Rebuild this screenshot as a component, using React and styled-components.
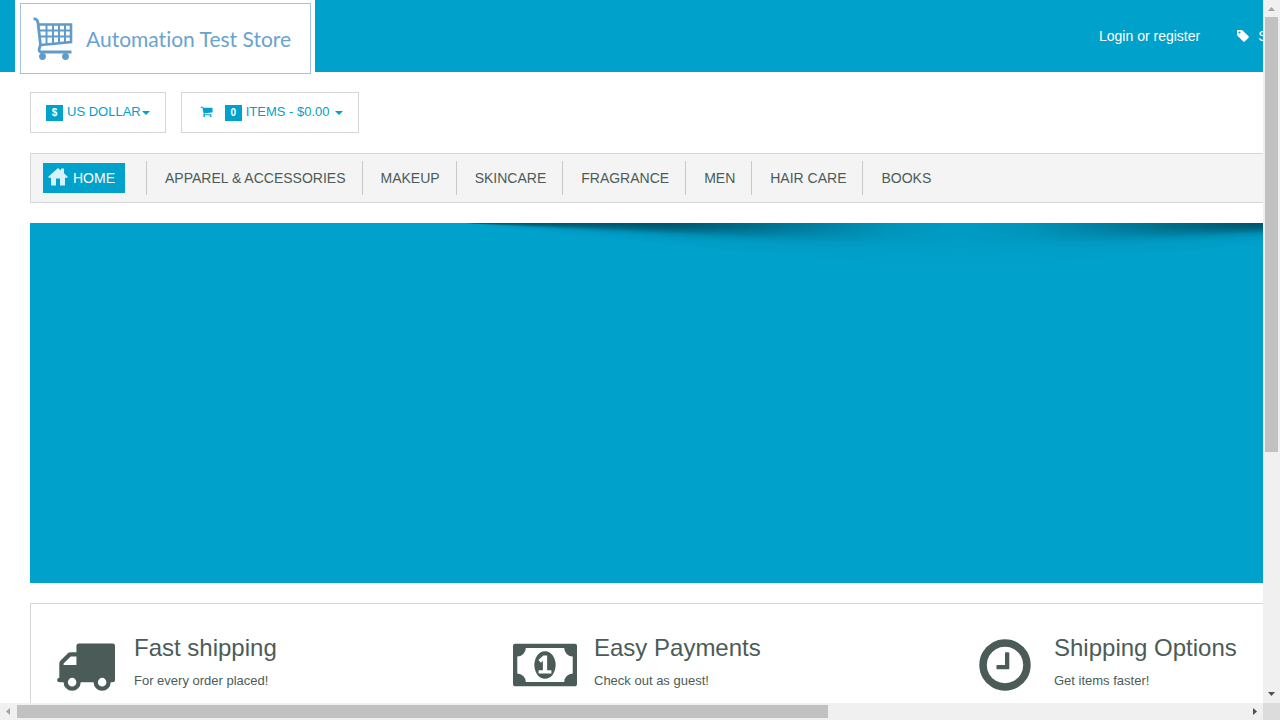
import React from 'react';
import styled, { createGlobalStyle } from 'styled-components';

const BLUE = '#00a1cb';
const INK = '#4b5c58';
const LINE = '#d6d6d6';

const Global = createGlobalStyle`
  * { box-sizing: border-box; }
  body {
    margin: 0;
    background: #fff;
    color: ${INK};
    font-family: "Liberation Sans", Arial, sans-serif;
    font-size: 14px;
    line-height: 20px;
  }
  a { color: inherit; text-decoration: none; }
  button { font: inherit; cursor: pointer; }
`;

const Frame = styled.div`
  display: grid;
  grid-template-columns: minmax(0, 1fr) 17px;
  grid-template-rows: minmax(0, 1fr) 17px;
  height: 100vh;
`;

const Viewport = styled.div`
  overflow: hidden;
`;

const Page = styled.div`
  min-width: 1920px;
`;

const Header = styled.header`
  display: flex;
  justify-content: space-between;
  height: 72px;
  padding: 0 15px;
  background: ${BLUE};
`;

const LogoPanel = styled.div`
  width: 300px;
  padding: 3px 4px 0 5px;
  background: #fff;
`;

const Logo = styled.a`
  display: flex;
  align-items: center;
  gap: 12px;
  height: 71px;
  padding-left: 12px;
  background: #fff;
  border: 1px solid #9fc3e4;
  color: #69a3d0;
  font-family: Lato, "Open Sans", sans-serif;
  font-size: 21px;
  font-variant-ligatures: none;
  white-space: nowrap;
`;

const TopNav = styled.nav`
  display: flex;
  align-items: center;
  gap: 36px;
  width: 806px;
  color: #fff;
`;

const TopLink = styled.a`
  display: flex;
  align-items: center;
  gap: 8px;
`;

const Tools = styled.div`
  display: flex;
  gap: 15px;
  padding: 20px 30px;
`;

const ToolButton = styled.button`
  display: flex;
  align-items: center;
  height: 41px;
  padding: 0 15px 2px ${(p) => (p.$wide ? '18px' : '15px')};
  background: #fff;
  border: 1px solid ${LINE};
  color: ${BLUE};
  font-size: 13px;
  white-space: nowrap;
`;

const Badge = styled.span`
  width: 17px;
  height: 16px;
  margin: 3px 4px 0 ${(p) => (p.$spaced ? '12px' : '0')};
  background: ${BLUE};
  color: #fff;
  font-size: 10px;
  font-weight: bold;
  line-height: 16px;
  text-align: center;
`;

const Caret = styled.span`
  margin: 3px 0 0 ${(p) => (p.$spaced ? '5px' : '1px')};
  border: 4px solid transparent;
  border-top-color: currentColor;
  border-bottom: 0;
`;

const MainNav = styled.nav`
  display: flex;
  align-items: center;
  height: 50px;
  margin: 0 30px 20px;
  padding-left: 12px;
  background: #f4f4f4;
  border: 1px solid ${LINE};
`;

const HomeLink = styled.a`
  display: flex;
  align-items: center;
  gap: 5px;
  height: 30px;
  margin-right: 21px;
  padding: 0 10px 0 5px;
  background: ${BLUE};
  color: #fff;
  svg { margin-bottom: 3px; }
`;

const NavLink = styled.a`
  height: 34px;
  padding: 0 16px 0 18px;
  border-left: 1px solid #c9c9c9;
  line-height: 34px;
  white-space: nowrap;
`;

const Banner = styled.section`
  display: flex;
  justify-content: center;
  height: 360px;
  margin: 0 30px 20px;
  background: ${BLUE};
`;

/* Half of the banner's curled-paper shadow: it opens out from the tip and fades to the centre. */
const Wing = styled.div`
  width: 500px;
  height: 60px;
  background: conic-gradient(
    from 90deg at 0 0,
    rgb(0 0 0 / 48%) 0deg,
    rgb(0 0 0 / 42%) 1deg,
    rgb(0 0 0 / 30%) 2deg,
    rgb(0 0 0 / 12%) 3deg,
    rgb(0 0 0 / 4%) 4deg,
    transparent 6deg
  );
  mask-image: linear-gradient(to right, #000 0%, #000 42%, rgb(0 0 0 / 80%) 54%, rgb(0 0 0 / 48%) 70%, rgb(0 0 0 / 18%) 86%, rgb(0 0 0 / 8%) 100%);
  transform: ${(p) => (p.$mirrored ? 'scaleX(-1)' : 'none')};
`;

const Perks = styled.section`
  display: grid;
  grid-template-columns: repeat(4, 460px);
  margin: 0 30px;
  padding: 29px 0 40px 9px;
  border: 1px solid ${LINE};
`;

const Perk = styled.article`
  display: grid;
  grid-template-columns: 90px 1fr;
  column-gap: 4px;
`;

const PerkIcon = styled.div`
  display: flex;
  justify-content: center;
  padding-top: 2px;
`;

const PerkTitle = styled.h2`
  margin: 0;
  font-size: 24px;
  font-weight: normal;
  line-height: 30px;
`;

const PerkText = styled.p`
  margin: 8px 0 0;
  font-size: 13px;
`;

const VBar = styled.div`
  display: flex;
  flex-direction: column;
  align-items: center;
  background: #f0f0f0;
`;

const HBar = styled.div`
  display: flex;
  align-items: center;
  background: #f0f0f0;
`;

const Corner = styled.div`
  background: #dcdcdc;
`;

const Arrow = styled.svg`
  flex: none;
  display: block;
  width: 17px;
  height: 17px;
  fill: ${(p) => (p.$off ? '#a3a3a3' : '#505050')};
`;

const Track = styled.div`
  display: flex;
  flex: 1;
  flex-direction: ${(p) => (p.$vertical ? 'column' : 'row')};
  align-self: center;
`;

const Thumb = styled.div`
  flex: 0 0 ${(p) => p.$size};
  width: ${(p) => (p.$vertical ? '13px' : 'auto')};
  height: ${(p) => (p.$vertical ? 'auto' : '13px')};
  background: #c1c1c1;
`;

const PATHS = {
  truck: 'M640 1408q0-52-38-90t-90-38-90 38-38 90 38 90 90 38 90-38 38-90zm-384-512h384v-256h-158q-13 0-22 9l-195 195q-9 9-9 22v30zm1280 512q0-52-38-90t-90-38-90 38-38 90 38 90 90 38 90-38 38-90zm256-1088v1024q0 15-4 26.500t-13.500 18.500-16.500 11.500-23.500 6-22.500 2-25.500 0-22.500-.5q0 106-75 181t-181 75-181-75-75-181h-384q0 106-75 181t-181 75-181-75-75-181h-64q-3 0-22.500.5t-25.500 0-22.500-2-23.500-6-16.500-11.500-13.500-18.500-4-26.500q0-26 19-45t45-19v-320q0-8-.5-35t0-38 2.500-34.500 6.500-37 14-30.500 22.500-30l198-198q19-19 50.500-32t58.500-13h160v-192q0-26 19-45t45-19h1024q26 0 45 19t19 45z',
  money: 'M768 1152h384v-96h-128v-448h-114l-148 137 77 80q42-37 55-57h2v288h-128v96zm512-256q0 70-21 142t-59.500 134-101.500 101-138 39-138-39-101.500-101-59.500-134-21-142 21-142 59.500-134 101.500-101 138-39 138 39 101.500 101 59.500 134 21 142zm512 256v-512q-106 0-181-75t-75-181h-1152q0 106-75 181t-181 75v512q106 0 181 75t75 181h1152q0-106 75-181t181-75zm128-832v1152q0 26-19 45t-45 19h-1792q-26 0-45-19t-19-45v-1152q0-26 19-45t45-19h1792q26 0 45 19t19 45z',
  clock: 'M1024 544v448q0 14-9 23t-23 9h-320q-14 0-23-9t-9-23v-64q0-14 9-23t23-9h224v-352q0-14 9-23t23-9h64q14 0 23 9t9 23zm416 352q0-148-73-273t-198-198-273-73-273 73-198 198-73 273 73 273 198 198 273 73 273-73 198-198 73-273zm224 0q0 209-103 385.500t-279.500 279.500-385.500 103-385.500-103-279.500-279.500-103-385.500 103-385.500 279.500-279.500 385.500-103 385.500 103 279.500 279.500 103 385.500z',
  cart: 'M704 1536q0 52-38 90t-90 38-90-38-38-90 38-90 90-38 90 38 38 90zm896 0q0 52-38 90t-90 38-90-38-38-90 38-90 90-38 90 38 38 90zm128-1088v512q0 24-16.500 42.500t-40.500 21.500l-1044 122q13 60 13 70 0 16-24 64h920q26 0 45 19t19 45-19 45-45 19h-1024q-26 0-45-19t-19-45q0-11 8-31.500t16-36 21.500-40 15.500-29.500l-177-823h-204q-26 0-45-19t-19-45 19-45 45-19h256q16 0 28.500 6.500t19.500 15.500 13 24.500 8 26 5.500 29.500 4.500 26h1201q26 0 45 19t19 45z',
  tag: 'M576 448q0-53-37.500-90.500t-90.500-37.500-90.500 37.500-37.500 90.500 37.500 90.500 90.500 37.500 90.500-37.500 37.500-90.500zm1067 576q0 53-37 90l-491 492q-39 37-91 37-53 0-90-37l-715-716q-38-37-64.500-101t-26.500-117v-416q0-52 38-90t90-38h416q53 0 117 26.500t102 64.500l715 714q37 39 37 91z',
};

function Glyph({ name, size, units = 1792 }) {
  return (
    <svg aria-hidden="true" height={size} width={Math.round((size * units) / 1792)} viewBox={`0 0 ${units} 1792`} fill="currentColor">
      <path d={PATHS[name]} />
    </svg>
  );
}

function LogoCart() {
  return (
    <svg aria-hidden="true" width="41" height="44" viewBox="0 0 41 44" fill="none" stroke="#5f9bcb" strokeWidth="2">
      <path d="M0.500 2 Q4.500 1.500 5 6 L7.500 28 Q4.500 35 8 35 H38.500" strokeWidth="2.800" />
      <path d="M5 7.500 H38 V25 L8 28" strokeWidth="2.600" />
      <path d="M6 13.500 H38 M7 19.500 H38" strokeWidth="2" />
      <path d="M13.500 7 V27 M20 7 V27 M26 7 V26 M32 7 V26" strokeWidth="2" />
      <circle cx="9.500" cy="39.500" r="3.400" fill="#5f9bcb" stroke="none" />
      <circle cx="32.500" cy="39.500" r="3.400" fill="#5f9bcb" stroke="none" />
    </svg>
  );
}

function HomeIcon() {
  return (
    <svg aria-hidden="true" width="20" height="18" viewBox="0 0 20 18" fill="#d6f1f8">
      <path d="M10 0 L13 2.600 V0.500 H16 V5.200 L20 9 L18.800 10 L17 9.500 V17.500 H12 V10.500 H8 V17.500 H3 V9.500 L1.200 10 L0 9 Z" />
    </svg>
  );
}

const CATEGORIES = ['APPAREL & ACCESSORIES', 'MAKEUP', 'SKINCARE', 'FRAGRANCE', 'MEN', 'HAIR CARE', 'BOOKS'];

const PERKS = [
  { icon: 'truck', title: 'Fast shipping', text: 'For every order placed!' },
  { icon: 'money', units: 1920, title: 'Easy Payments', text: 'Check out as guest!' },
  { icon: 'clock', title: 'Shipping Options', text: 'Get items faster!' },
];

export default function App() {
  return (
    <>
      <Global />
      <Frame>
        <Viewport>
          <Page>
            <Header>
              <LogoPanel>
                <Logo href="#">
                  <LogoCart />
                  <span>Automation Test Store</span>
                </Logo>
              </LogoPanel>
              <TopNav>
                <TopLink href="#">Login or register</TopLink>
                <TopLink href="#">
                  <Glyph name="tag" size={14} />
                  Specials
                </TopLink>
              </TopNav>
            </Header>
            <Tools>
              <ToolButton type="button">
                <Badge>$</Badge>
                US DOLLAR
                <Caret />
              </ToolButton>
              <ToolButton type="button" $wide>
                <Glyph name="cart" size={13} />
                <Badge $spaced>0</Badge>
                ITEMS - $0.00
                <Caret $spaced />
              </ToolButton>
            </Tools>
            <MainNav>
              <HomeLink href="#">
                <HomeIcon />
                HOME
              </HomeLink>
              {CATEGORIES.map((name) => (
                <NavLink key={name} href="#">{name}</NavLink>
              ))}
            </MainNav>
            <Banner>
              <Wing />
              <Wing $mirrored />
            </Banner>
            <Perks>
              {PERKS.map((perk) => (
                <Perk key={perk.title}>
                  <PerkIcon>
                    <Glyph name={perk.icon} size={60} units={perk.units} />
                  </PerkIcon>
                  <div>
                    <PerkTitle>{perk.title}</PerkTitle>
                    <PerkText>{perk.text}</PerkText>
                  </div>
                </Perk>
              ))}
            </Perks>
          </Page>
        </Viewport>
        <VBar aria-hidden="true">
          <Arrow $off viewBox="0 0 17 17"><path d="M5 11 L8.500 7 L12 11 Z" /></Arrow>
          <Track $vertical><Thumb $vertical $size="65%" /></Track>
          <Arrow viewBox="0 0 17 17"><path d="M5 6 H12 L8.500 10 Z" /></Arrow>
        </VBar>
        <HBar aria-hidden="true">
          <Arrow $off viewBox="0 0 17 17"><path d="M10 5 V12 L6 8.500 Z" /></Arrow>
          <Track><Thumb $size="66%" /></Track>
          <Arrow viewBox="0 0 17 17"><path d="M7 5 V12 L11 8.500 Z" /></Arrow>
        </HBar>
        <Corner />
      </Frame>
    </>
  );
}
